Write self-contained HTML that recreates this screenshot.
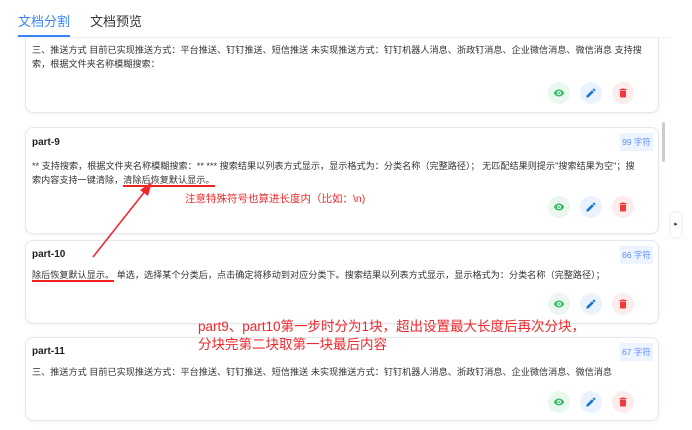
<!DOCTYPE html>
<html><head><meta charset="utf-8"><style>
*{margin:0;padding:0;box-sizing:border-box}
body{width:692px;height:430px;overflow:hidden;background:#fff;font-family:"Liberation Sans","Noto Sans CJK SC",sans-serif;color:#333;position:relative}
.tab{position:absolute;top:11px;font-size:13px}
.card{position:absolute;left:25px;width:634px;border:1px solid #e4e7ed;border-radius:8px;background:#fff;box-shadow:0 1px 3px rgba(0,0,0,.06)}
.t{position:absolute;left:6px;font-size:10px;font-weight:bold;color:#222}
.p{position:absolute;left:6px;right:8px;font-size:9.15px;line-height:14px;color:#333;white-space:nowrap}
.badge{position:absolute;right:5px;width:33px;height:18px;background:#eef4ff;color:#5b8ff9;font-size:8.5px;line-height:18px;text-align:center}
.btns{position:absolute;right:20px;width:90px;height:22px}
.b{position:absolute;top:0;width:22px;height:22px;border-radius:50%}
.b svg{position:absolute;left:5px;top:5px}
.u{border-bottom:2px solid #e22;}
.red{position:absolute;color:#f0282d}
</style></head><body>
<div class="tab" style="left:18px;color:#3b86f7">文档分割</div>
<div class="tab" style="left:90px;color:#333">文档预览</div>
<div style="position:absolute;left:18px;top:35px;width:52px;height:2px;background:#3b86f7"></div>
<div style="position:absolute;left:18px;top:37px;width:652px;height:1px;background:#eef0f3"></div>

<div class="card" style="top:38px;height:75px;border-top:none;border-radius:0 0 8px 8px">
<div class="p" style="top:5px">三、推送方式 目前已实现推送方式：平台推送、钉钉推送、短信推送 未实现推送方式：钉钉机器人消息、浙政钉消息、企业微信消息、微信消息 支持搜<br>索，根据文件夹名称模糊搜索：</div>
<div class="btns" style="top:44px"></div></div>

<div class="card" style="top:127px;height:107px">
<div class="t" style="top:9px">part-9</div><div class="badge" style="top:5px">99 字符</div>
<div class="p" style="top:31px">** 支持搜索，根据文件夹名称模糊搜索：** *** 搜索结果以列表方式显示，显示格式为：分类名称（完整路径）； 无匹配结果则提示"搜索结果为空"；搜<br>索内容支持一键清除，<span class="u">清除后恢复默认显示。</span></div>
<div class="btns" style="top:68px"></div></div>

<div class="card" style="top:240px;height:84px">
<div class="t" style="top:8px">part-10</div><div class="badge" style="top:5px">66 字符</div>
<div class="p" style="top:27px"><span class="u">除后恢复默认显示。</span> 单选，选择某个分类后，点击确定将移动到对应分类下。搜索结果以列表方式显示，显示格式为：分类名称（完整路径）；</div>
<div class="btns" style="top:52px"></div></div>

<div class="card" style="top:337px;height:84px">
<div class="t" style="top:8px">part-11</div><div class="badge" style="top:5px">67 字符</div>
<div class="p" style="top:27px">三、推送方式 目前已实现推送方式：平台推送、钉钉推送、短信推送 未实现推送方式：钉钉机器人消息、浙政钉消息、企业微信消息、微信消息</div>
<div class="btns" style="top:53px"></div></div>

<div class="red" style="left:185px;top:191px;font-size:10.5px">注意特殊符号也算进长度内（比如：\n)</div>
<div class="red" style="left:198px;top:318px;font-size:13.5px;line-height:18px">part9、part10第一步时分为1块，超出设置最大长度后再次分块，<br>分块完第二块取第一块最后内容</div>
<svg style="position:absolute;left:0;top:0" width="692" height="430"><line x1="93" y1="257" x2="146" y2="190" stroke="#f0282d" stroke-width="1.6"/><polygon points="152,182 140,190 148,196" fill="#f0282d"/></svg>
<div style="position:absolute;left:662px;top:122px;width:3px;height:40px;background:#ccc;border-radius:2px"></div>
<div style="position:absolute;left:671px;top:213px;width:10px;height:24px;background:#fff;box-shadow:0 0 3px rgba(0,0,0,.15);font-size:7px;line-height:24px;text-align:center;color:#333">▸</div>
<script>
document.querySelectorAll('.btns').forEach(function(d){
d.innerHTML='<div class="b" style="left:0;background:#e9f7ee"><svg width="12" height="12" viewBox="0 0 24 24"><path d="M12 5C7 5 3 8.5 1.5 12 3 15.5 7 19 12 19s9-3.5 10.5-7C21 8.5 17 5 12 5z" fill="#3cbf6a"/><circle cx="12" cy="12" r="4" fill="#fff"/><circle cx="12" cy="12" r="2" fill="#3cbf6a"/></svg></div>'+
'<div class="b" style="left:32px;background:#eaf3fd"><svg width="12" height="12" viewBox="0 0 24 24"><path d="M3 17.3V21h3.7L17.8 9.9l-3.7-3.7zM20.7 7c.4-.4.4-1 0-1.4l-2.3-2.3c-.4-.4-1-.4-1.4 0l-1.8 1.8 3.7 3.7z" fill="#1976d2"/></svg></div>'+
'<div class="b" style="left:64px;background:#fdecec"><svg width="12" height="12" viewBox="0 0 24 24"><path d="M6 19c0 1.1.9 2 2 2h8c1.1 0 2-.9 2-2V7H6zM19 4h-3.5l-1-1h-5l-1 1H5v2h14z" fill="#ef3b3b"/></svg></div>';});
</script>
</body></html>
